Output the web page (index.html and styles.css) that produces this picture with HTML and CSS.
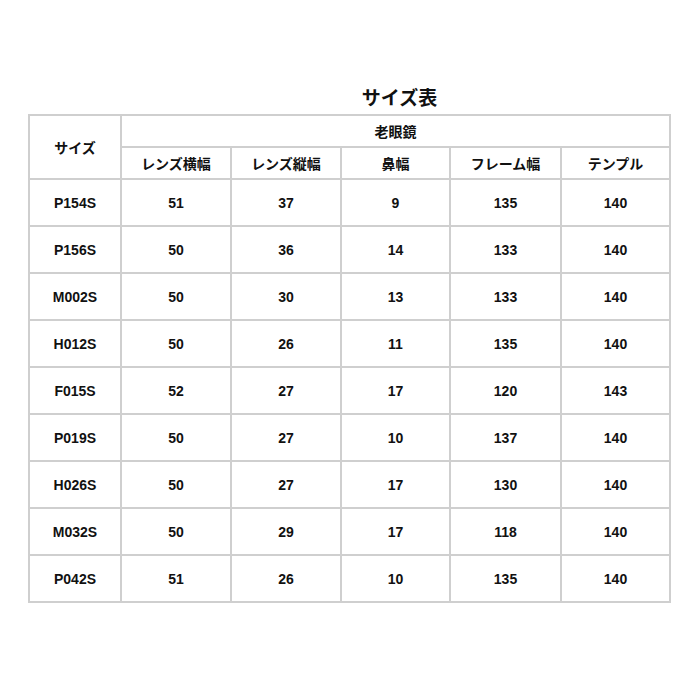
FILE: index.html
```html
<!DOCTYPE html>
<html lang="ja">
<head>
<meta charset="utf-8">
<link rel="stylesheet" href="styles.css">
</head>
<body>
<div class="page">
  <div class="title-row">
    <div class="title-spacer"></div>
    <h1 class="title">サイズ表</h1>
  </div>
  <table class="size-table">
    <colgroup>
      <col class="c1"><col class="c2"><col class="c3"><col class="c4"><col class="c5"><col class="c6">
    </colgroup>
    <thead>
      <tr class="hrow">
        <th rowspan="2">サイズ</th>
        <th colspan="5">老眼鏡</th>
      </tr>
      <tr class="hrow">
        <th>レンズ横幅</th>
        <th>レンズ縦幅</th>
        <th>鼻幅</th>
        <th>フレーム幅</th>
        <th>テンプル</th>
      </tr>
    </thead>
    <tbody>
      <tr><td>P154S</td><td>51</td><td>37</td><td>9</td><td>135</td><td>140</td></tr>
      <tr><td>P156S</td><td>50</td><td>36</td><td>14</td><td>133</td><td>140</td></tr>
      <tr><td>M002S</td><td>50</td><td>30</td><td>13</td><td>133</td><td>140</td></tr>
      <tr><td>H012S</td><td>50</td><td>26</td><td>11</td><td>135</td><td>140</td></tr>
      <tr><td>F015S</td><td>52</td><td>27</td><td>17</td><td>120</td><td>143</td></tr>
      <tr><td>P019S</td><td>50</td><td>27</td><td>10</td><td>137</td><td>140</td></tr>
      <tr><td>H026S</td><td>50</td><td>27</td><td>17</td><td>130</td><td>140</td></tr>
      <tr><td>M032S</td><td>50</td><td>29</td><td>17</td><td>118</td><td>140</td></tr>
      <tr><td>P042S</td><td>51</td><td>26</td><td>10</td><td>135</td><td>140</td></tr>
    </tbody>
  </table>
</div>
</body>
</html>
```

FILE: styles.css
```css
html, body {
  margin: 0;
  padding: 0;
  background: #ffffff;
}
body {
  font-family: "Liberation Sans", "Noto Sans CJK JP", sans-serif;
  color: #111111;
}
.page {
  padding: 87px 0 0 28px;
}
.title-row {
  display: flex;
  width: 643px;
  margin-bottom: 3px;
}
.title-spacer {
  width: 100px;
  flex: none;
}
.title {
  flex: 1;
  margin: 0;
  text-align: center;
  font-size: 19px;
  line-height: 24px;
  font-weight: bold;
}
.size-table {
  border-collapse: collapse;
  table-layout: fixed;
  width: 643px;
  font-size: 14px;
  font-weight: bold;
}
.c1 { width: 92px; }
.c2 { width: 110px; }
.c3 { width: 110px; }
.c4 { width: 109px; }
.c5 { width: 111px; }
.c6 { width: 109px; }
.size-table th,
.size-table td {
  border: 2px solid #cfcfcf;
  text-align: center;
  vertical-align: middle;
  padding: 0;
  font-weight: bold;
}
.hrow th {
  height: 30px;
}
.size-table td {
  height: 45px;
}
```
